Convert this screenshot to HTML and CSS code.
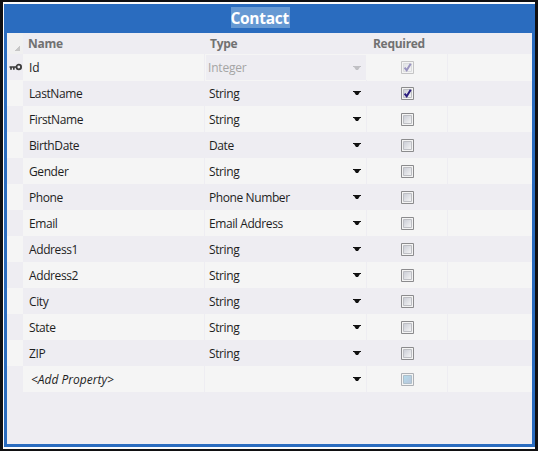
FILE: index.html
```html
<!DOCTYPE html>
<html lang="en">
<head>
<meta charset="utf-8">
<title>Contact</title>
<link rel="stylesheet" href="styles.css">
</head>
<body>
<main class="entity">
  <header class="title"><span class="title-text">Contact</span></header>
  <section class="grid" id="grid">
    <div class="row head">
      <div class="gutter"><span class="corner"></span></div>
      <div class="cell name">Name</div>
      <div class="cell type">Type</div>
      <div class="cell required">Required</div>
      <div class="cell rest"></div>
    </div>
  </section>
</main>
<script src="script.js"></script>
</body>
</html>
```
FILE: styles.css
```css
* { box-sizing: border-box; }
body {
  margin: 0;
  width: 538px;
  height: 451px;
  padding: 2px 3px;
  background: #101012;
  font-family: "Open Sans", "Noto Sans", sans-serif;
  font-size: 12px;
  color: #1e1e1e;
  overflow: hidden;
}
.entity {
  width: 532px;
  height: 447px;
  background: #2a6cbf;
  border: solid #fcfcfc;
  border-width: 2px 0 2px 1px;
  padding: 0 3px 3px;
}
.title {
  height: 29px;
  display: flex;
  justify-content: center;
  align-items: flex-start;
  padding: 3px 19px 0 0;
}
.title-text {
  height: 21px;
  line-height: 23px;
  width: 59px;
  background: #6699d3;
  color: #fff;
  font-size: 15.5px;
  font-weight: 700;
  letter-spacing: -0.3px;
  white-space: nowrap;
}
.grid { height: 411px; background: #eeedf2; }
.row {
  display: grid;
  grid-template-columns: 16px 182px 162px 81px 1fr;
  height: 26px;
}
.row.head { height: 21px; color: #717171; font-weight: 700; }
.gutter { display: flex; align-items: center; justify-content: center; background: #eeedf2; }
.head .gutter { background: #f0f0f0; align-items: flex-end; justify-content: flex-end; padding: 0 3px 3px 0; }
.corner {
  width: 5px;
  height: 5px;
  background: linear-gradient(135deg, transparent 50%, #c6c6c6 50%);
}
.alt .gutter { background: #f5f5f5; }
.cell { display: flex; align-items: center; white-space: nowrap; }
.light .cell { background: #f5f5f5; }
.name, .type, .required { border-right: 1px solid #eeedf2; }
.label { letter-spacing: -0.4px; line-height: 24px; padding-top: 2px; }
.name { padding-left: 6px; }
.type { justify-content: space-between; padding: 0 5px 0 4px; }
.required { justify-content: center; }
.head .cell { line-height: 21px; letter-spacing: -0.3px; }
.head .name { padding-left: 5px; }
.head .type { padding-left: 5px; }
.head .required { justify-content: flex-start; padding-left: 6px; }
.light.locked .type { background: #eeedf2; border: 1px solid #f5f5f5; padding: 0 5px 0 2px; color: #a5a5a5; }
.locked .label { padding-top: 1px; letter-spacing: -0.2px; }
.adding .name { padding-left: 8px; font-style: italic; }
.adding .label { letter-spacing: 0; }
.arrow { width: 8px; height: 4px; fill: #111; }
.locked .arrow { fill: #c0c0c4; }
.check { width: 13px; height: 13px; }
.locked .check { opacity: .45; }
.key { width: 13px; height: 8px; margin-bottom: 1px; }
```
FILE: script.js
```js
const rows = [
  ["Id", "Integer", "locked"],
  ["LastName", "String", "checked"],
  ["FirstName", "String"],
  ["BirthDate", "Date"],
  ["Gender", "String"],
  ["Phone", "Phone Number"],
  ["Email", "Email Address"],
  ["Address1", "String"],
  ["Address2", "String"],
  ["City", "String"],
  ["State", "String"],
  ["ZIP", "String"],
  ["&lt;Add Property&gt;", "", "adding"]
];

const arrow = '<svg class="arrow" viewBox="0 0 8 4"><path d="M0 0h8v1H7L5 4H3L1 1H0z"/></svg>';
const key = '<svg class="key" viewBox="0 0 13 8"><path d="M.5 4h7M2 4v2.8M4.8 4v2.8" fill="none" stroke="#3c3c3c" stroke-width="1.7"/><circle cx="9.8" cy="4" r="2.3" fill="none" stroke="#3c3c3c" stroke-width="1.8"/></svg>';

function checkbox(state, index) {
  const ticked = state === "locked" || state === "checked";
  const adding = state === "adding";
  const start = adding ? "#b4dcec" : "#c8cbd4";
  const end = adding ? "#b9c4da" : "#f6f6f6";
  const id = "fill-" + index;
  return `<svg class="check" viewBox="0 0 13 13">
    <defs><linearGradient id="${id}" x1="0" y1="0" x2="1" y2="1"><stop stop-color="${start}"/><stop offset="1" stop-color="${end}"/></linearGradient></defs>
    <path d="M.5.5h12v12H.5z" fill="#f4f4f4" stroke="${adding ? "#adb0b5" : "#8b8b8d"}"/>
    <path d="M2.5 2.5h8v8h-8z" fill="url(#${id})" stroke="${adding ? "#aebfca" : "#bdbec3"}"/>
    ${ticked ? '<path d="M3.6 6.6 5.7 9.3 9.7 2.8" fill="none" stroke="#2b1d7e" stroke-width="2"/>' : ""}
  </svg>`;
}

document.getElementById("grid").insertAdjacentHTML("beforeend", rows.map(([name, type, state = ""], i) => `
  <div class="row ${i % 2 ? "alt" : "light"} ${state}">
    <div class="gutter">${state === "locked" ? key : ""}</div>
    <div class="cell name"><span class="label">${name}</span></div>
    <div class="cell type"><span class="label">${type}</span>${arrow}</div>
    <div class="cell required">${checkbox(state, i)}</div>
    <div class="cell rest"></div>
  </div>`).join(""));
```
